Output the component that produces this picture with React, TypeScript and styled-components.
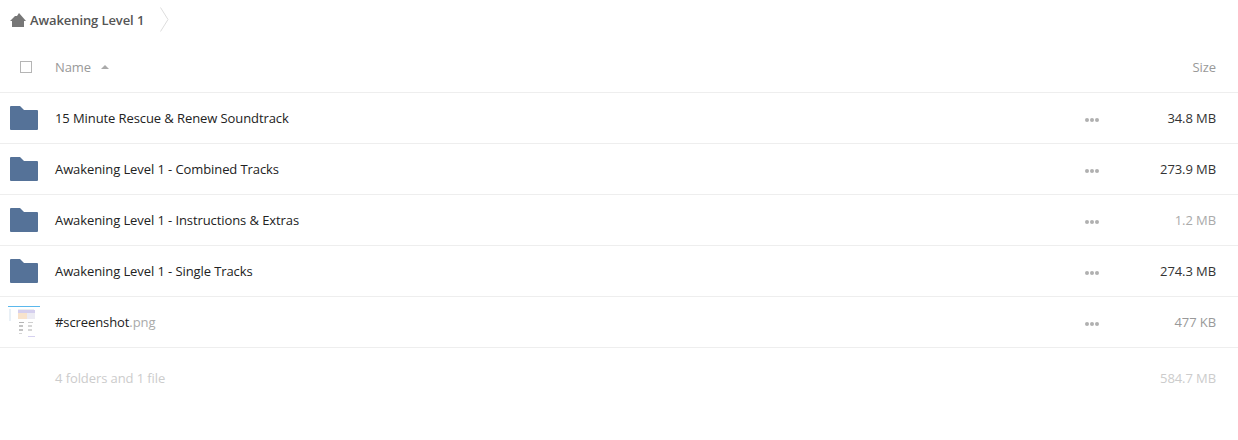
import * as React from 'react';
import styled, { createGlobalStyle } from 'styled-components';

const GlobalStyle = createGlobalStyle`
    html, body {
        margin: 0;
        padding: 0;
        background: #fff;
        font-family: "Open Sans", "Liberation Sans", sans-serif;
        font-size: 13px;
        letter-spacing: -0.09px;
    }
`;

const Page = styled.div`
    width: 1238px;
    height: 440px;
    overflow: hidden;
`;

const Breadcrumb = styled.div`
    height: 39px;
    padding: 0 0 2px 10px;
    display: flex;
    align-items: center;
    color: #555;
    font-weight: 600;
    font-size: 13px;
`;

const CrumbName = styled.span`
    margin-left: 4px;
`;

const Chevron = styled.svg`
    margin-left: 16px;
`;

const HeaderRow = styled.div`
    height: 50px;
    padding: 1px 22px 0 0;
    display: flex;
    align-items: center;
    border-bottom: 1px solid #eee;
    color: #999;
`;

const CheckCell = styled.div`
    width: 55px;
    padding-left: 20px;
    box-sizing: border-box;
    display: flex;
`;

const Checkbox = styled.span`
    width: 10px;
    height: 10px;
    border: 1px solid #b5b5b5;
    display: block;
`;

const NameHead = styled.div`
    flex: 1;
    display: flex;
    align-items: center;
`;

const SortArrow = styled.span`
    width: 0;
    height: 0;
    margin-left: 10px;
    border-left: 4px solid transparent;
    border-right: 4px solid transparent;
    border-bottom: 4px solid #aaa;
`;

const Row = styled.div`
    height: 50px;
    display: flex;
    align-items: center;
    border-bottom: 1px solid #eee;
    padding-right: 22px;
`;

const IconCell = styled.div<{ $inset: number }>`
    width: 55px;
    padding-left: ${p => p.$inset}px;
    box-sizing: border-box;
    display: flex;
    align-items: center;
`;

const FileName = styled.div`
    flex: 1;
    color: #222;
`;

const Extension = styled.span`
    color: #aaa;
`;

const Dots = styled.div`
    width: 14px;
    display: flex;
    gap: 1px;
    margin-top: 3px;
`;

const Dot = styled.span`
    width: 4px;
    height: 4px;
    border-radius: 50%;
    background: #b0b0b0;
`;

const SizeCell = styled.div<{ $tone?: 'dim' | 'faint' | 'ghost' }>`
    width: 117px;
    text-align: right;
    color: ${p =>
        p.$tone === 'ghost'
            ? '#ccc'
            : p.$tone === 'faint'
            ? '#aaa'
            : p.$tone === 'dim'
            ? '#999'
            : '#333'};
`;

const Summary = styled.div`
    height: 60px;
    display: flex;
    align-items: center;
    padding: 0 22px 0 55px;
    color: #ccc;
`;

const SummaryText = styled.div`
    flex: 1;
`;

const Thumb = styled.svg`
    display: block;
`;

const FolderSvg = styled.svg`
    display: block;
`;

const HomeIcon = () => (
    <svg width="16" height="14" viewBox="0 0 16 14">
        <path d="M9 0 L16 8 H14 V14 H2 V8 H0 L5 3 H7 Z" fill="#777" />
    </svg>
);

const FolderIcon = () => (
    <FolderSvg width="28" height="24" viewBox="0 0 28 24">
        <path d="M1 0 H10 L14 4 H27 Q28 4 28 5 V23 Q28 24 27 24 H1 Q0 24 0 23 V1 Q0 0 1 0 Z" fill="#557298" />
    </FolderSvg>
);

const ScreenshotThumb = () => (
    <Thumb width="32" height="32" viewBox="0 0 32 32">
        <rect x="0" y="0" width="32" height="1" fill="#5bb8ec" />
        <rect x="1" y="3" width="2" height="12" fill="#e9f0f6" />
        <rect x="10" y="3" width="16" height="1" fill="#eee" />
        <rect x="10" y="4" width="17" height="3" fill="#d5cfee" />
        <rect x="10" y="7" width="9" height="6" fill="#f8e3cc" />
        <rect x="19" y="7" width="8" height="6" fill="#ecebf3" />
        <rect x="11" y="16" width="5" height="1" fill="#b5b5b5" />
        <rect x="20" y="16" width="5" height="1" fill="#cfcfcf" />
        <rect x="11" y="19" width="4" height="2" fill="#c4c4c4" />
        <rect x="20" y="19" width="4" height="2" fill="#d6d6d6" />
        <rect x="11" y="23" width="4" height="2" fill="#c4c4c4" />
        <rect x="20" y="23" width="4" height="2" fill="#d6d6d6" />
        <rect x="11" y="27" width="3" height="1" fill="#d6d6d6" />
        <rect x="20" y="30" width="7" height="1" fill="#d5d1ef" />
    </Thumb>
);

const folders = [
    { name: '15 Minute Rescue & Renew Soundtrack', size: '34.8 MB' },
    { name: 'Awakening Level 1 - Combined Tracks', size: '273.9 MB' },
    { name: 'Awakening Level 1 - Instructions & Extras', size: '1.2 MB', faint: true },
    { name: 'Awakening Level 1 - Single Tracks', size: '274.3 MB' },
];

const MoreDots = () => (
    <Dots>
        <Dot />
        <Dot />
        <Dot />
    </Dots>
);

export default function App() {
    return (
        <Page>
            <GlobalStyle />
            <Breadcrumb>
                <HomeIcon />
                <CrumbName>Awakening Level 1</CrumbName>
                <Chevron width="9" height="25" viewBox="0 0 9 25">
                    <path d="M0.5 0.5 L8 12.5 L0.5 24.5" fill="none" stroke="#ddd" />
                </Chevron>
            </Breadcrumb>
            <HeaderRow>
                <CheckCell>
                    <Checkbox />
                </CheckCell>
                <NameHead>
                    Name
                    <SortArrow />
                </NameHead>
                <SizeCell $tone="dim">Size</SizeCell>
            </HeaderRow>
            {folders.map(f => (
                <Row key={f.name}>
                    <IconCell $inset={10}>
                        <FolderIcon />
                    </IconCell>
                    <FileName>{f.name}</FileName>
                    <MoreDots />
                    <SizeCell $tone={f.faint ? 'faint' : undefined}>{f.size}</SizeCell>
                </Row>
            ))}
            <Row>
                <IconCell $inset={8}>
                    <ScreenshotThumb />
                </IconCell>
                <FileName>
                    #screenshot<Extension>.png</Extension>
                </FileName>
                <MoreDots />
                <SizeCell $tone="dim">477 KB</SizeCell>
            </Row>
            <Summary>
                <SummaryText>4 folders and 1 file</SummaryText>
                <SizeCell $tone="ghost">584.7 MB</SizeCell>
            </Summary>
        </Page>
    );
}
